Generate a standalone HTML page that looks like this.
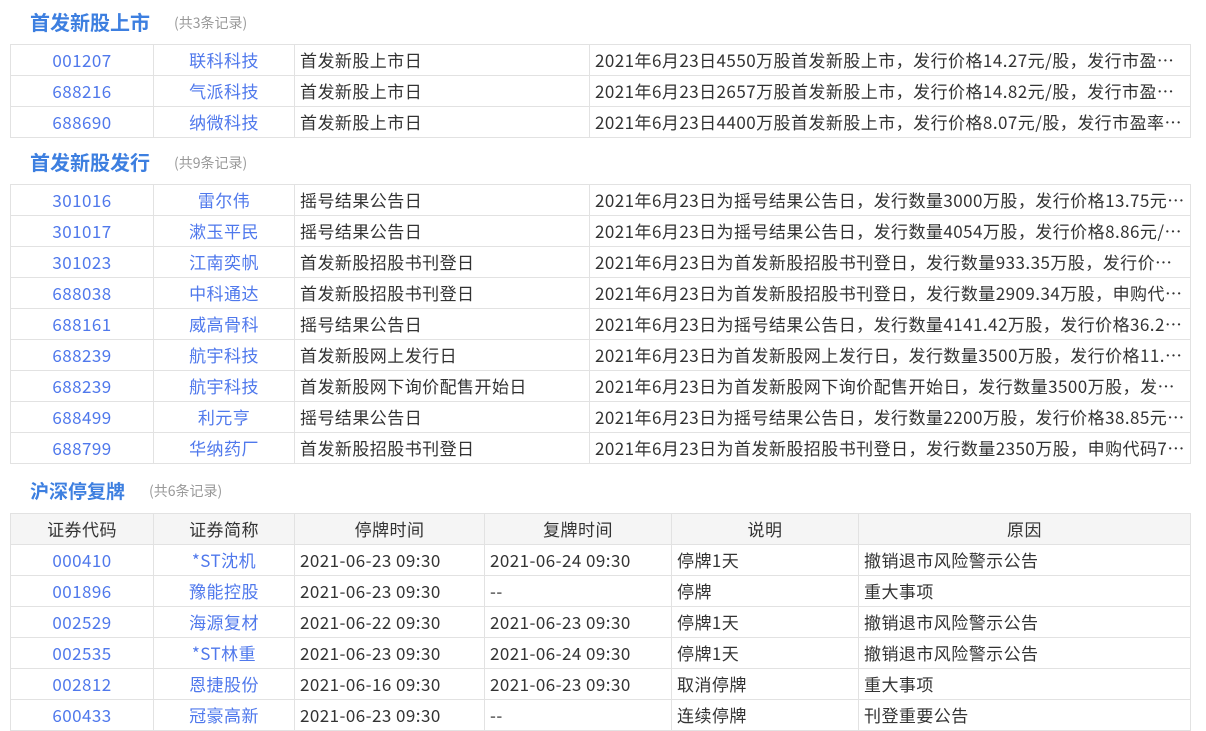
<!DOCTYPE html><html><head><meta charset="utf-8"><style>
body{margin:0;background:#fff;font-family:"Noto Sans CJK SC","Liberation Sans",sans-serif;font-size:17px;letter-spacing:0.45px;color:#333;width:1206px;height:731px;overflow:hidden;position:relative}
.t{position:absolute;left:30px;font-size:20px;letter-spacing:0;font-weight:bold;color:#3d7fe0;line-height:28px}
.t span{font-size:14px;font-weight:normal;color:#999;margin-left:24px;vertical-align:2px}
table{position:absolute;left:10px;border-collapse:collapse;table-layout:fixed;width:1181px}
td,th{border:1px solid #e2e2e2;height:30px;line-height:30px;padding:0 5px;white-space:nowrap;overflow:hidden;text-overflow:ellipsis;font-weight:normal}
th{background:#f5f5f5;text-align:center}
td.c{text-align:center;color:#4f78ec}
</style></head><body>
<div class="t" style="top:8px">首发新股上市<span>(共3条记录)</span></div>
<table style="top:44px"><colgroup><col style="width:143px"><col style="width:141px"><col style="width:295px"><col></colgroup>
<tr><td class="c">001207</td><td class="c">联科科技</td><td>首发新股上市日</td><td>2021年6月23日4550万股首发新股上市，发行价格14.27元/股，发行市盈率22.99倍</td></tr>
<tr><td class="c">688216</td><td class="c">气派科技</td><td>首发新股上市日</td><td>2021年6月23日2657万股首发新股上市，发行价格14.82元/股，发行市盈率22.99倍</td></tr>
<tr><td class="c">688690</td><td class="c">纳微科技</td><td>首发新股上市日</td><td>2021年6月23日4400万股首发新股上市，发行价格8.07元/股，发行市盈率5555倍</td></tr>
</table>
<div class="t" style="top:148px">首发新股发行<span>(共9条记录)</span></div>
<table style="top:184px"><colgroup><col style="width:143px"><col style="width:141px"><col style="width:295px"><col></colgroup>
<tr><td class="c">301016</td><td class="c">雷尔伟</td><td>摇号结果公告日</td><td>2021年6月23日为摇号结果公告日，发行数量3000万股，发行价格13.75元/股，发行市盈率</td></tr>
<tr><td class="c">301017</td><td class="c">漱玉平民</td><td>摇号结果公告日</td><td>2021年6月23日为摇号结果公告日，发行数量4054万股，发行价格8.86元/股，发行市盈率</td></tr>
<tr><td class="c">301023</td><td class="c">江南奕帆</td><td>首发新股招股书刊登日</td><td>2021年6月23日为首发新股招股书刊登日，发行数量933.35万股，发行价格待定</td></tr>
<tr><td class="c">688038</td><td class="c">中科通达</td><td>首发新股招股书刊登日</td><td>2021年6月23日为首发新股招股书刊登日，发行数量2909.34万股，申购代码787038</td></tr>
<tr><td class="c">688161</td><td class="c">威高骨科</td><td>摇号结果公告日</td><td>2021年6月23日为摇号结果公告日，发行数量4141.42万股，发行价格36.22元/股</td></tr>
<tr><td class="c">688239</td><td class="c">航宇科技</td><td>首发新股网上发行日</td><td>2021年6月23日为首发新股网上发行日，发行数量3500万股，发行价格11.48元/股</td></tr>
<tr><td class="c">688239</td><td class="c">航宇科技</td><td>首发新股网下询价配售开始日</td><td>2021年6月23日为首发新股网下询价配售开始日，发行数量3500万股，发行价格待定</td></tr>
<tr><td class="c">688499</td><td class="c">利元亨</td><td>摇号结果公告日</td><td>2021年6月23日为摇号结果公告日，发行数量2200万股，发行价格38.85元/股，发行市盈率</td></tr>
<tr><td class="c">688799</td><td class="c">华纳药厂</td><td>首发新股招股书刊登日</td><td>2021年6月23日为首发新股招股书刊登日，发行数量2350万股，申购代码787799</td></tr>
</table>
<div class="t" style="top:477px;font-size:19px">沪深停复牌<span>(共6条记录)</span></div>
<table style="top:513px"><colgroup><col style="width:143px"><col style="width:141px"><col style="width:190px"><col style="width:187px"><col style="width:187px"><col></colgroup>
<tr><th>证券代码</th><th>证券简称</th><th>停牌时间</th><th>复牌时间</th><th>说明</th><th>原因</th></tr>
<tr><td class="c">000410</td><td class="c">*ST沈机</td><td>2021-06-23 09:30</td><td>2021-06-24 09:30</td><td>停牌1天</td><td>撤销退市风险警示公告</td></tr>
<tr><td class="c">001896</td><td class="c">豫能控股</td><td>2021-06-23 09:30</td><td>--</td><td>停牌</td><td>重大事项</td></tr>
<tr><td class="c">002529</td><td class="c">海源复材</td><td>2021-06-22 09:30</td><td>2021-06-23 09:30</td><td>停牌1天</td><td>撤销退市风险警示公告</td></tr>
<tr><td class="c">002535</td><td class="c">*ST林重</td><td>2021-06-23 09:30</td><td>2021-06-24 09:30</td><td>停牌1天</td><td>撤销退市风险警示公告</td></tr>
<tr><td class="c">002812</td><td class="c">恩捷股份</td><td>2021-06-16 09:30</td><td>2021-06-23 09:30</td><td>取消停牌</td><td>重大事项</td></tr>
<tr><td class="c">600433</td><td class="c">冠豪高新</td><td>2021-06-23 09:30</td><td>--</td><td>连续停牌</td><td>刊登重要公告</td></tr>
</table>
</body></html>
